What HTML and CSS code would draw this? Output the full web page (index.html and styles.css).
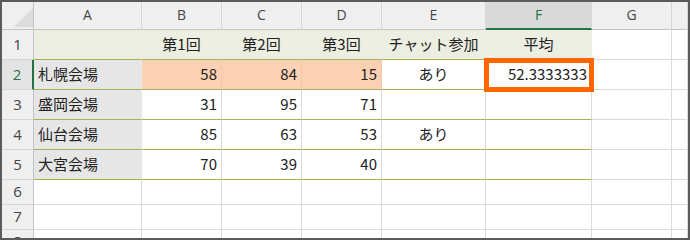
FILE: index.html
```html
<!DOCTYPE html>
<html lang="ja">
<head>
<meta charset="UTF-8" />
<title>会場別集計</title>
<link rel="stylesheet" href="styles.css">
</head>
<body>
  <div class="sheet">
    <!-- 列見出し -->
    <div class="row head">
      <div class="corner">
        <svg width="19" height="19" viewBox="0 0 19 19"><polygon points="19,0 19,19 0,19" fill="#dcdcdc"/></svg>
      </div>
      <div class="hd">A</div>
      <div class="hd">B</div>
      <div class="hd">C</div>
      <div class="hd">D</div>
      <div class="hd">E</div>
      <div class="hd sel">F</div>
      <div class="hd">G</div>
      <div class="hd"></div>
    </div>

    <div class="row r">
      <div class="rh">1</div>
      <div class="c title"></div>
      <div class="c title mid">第1回</div>
      <div class="c title mid">第2回</div>
      <div class="c title mid">第3回</div>
      <div class="c title mid">チャット参加</div>
      <div class="c title mid">平均</div>
      <div class="c"></div>
      <div class="c"></div>
    </div>

    <div class="row r">
      <div class="rh sel">2</div>
      <div class="c name band">札幌会場</div>
      <div class="c hl band num">58</div>
      <div class="c hl band num">84</div>
      <div class="c hl band num">15</div>
      <div class="c band mid">あり</div>
      <div class="c band num active">52.3333333</div>
      <div class="c"></div>
      <div class="c"></div>
    </div>

    <div class="row r">
      <div class="rh">3</div>
      <div class="c name band">盛岡会場</div>
      <div class="c band num">31</div>
      <div class="c band num">95</div>
      <div class="c band num">71</div>
      <div class="c band"></div>
      <div class="c band"></div>
      <div class="c"></div>
      <div class="c"></div>
    </div>

    <div class="row r">
      <div class="rh">4</div>
      <div class="c name band">仙台会場</div>
      <div class="c band num">85</div>
      <div class="c band num">63</div>
      <div class="c band num">53</div>
      <div class="c band mid">あり</div>
      <div class="c band"></div>
      <div class="c"></div>
      <div class="c"></div>
    </div>

    <div class="row r">
      <div class="rh">5</div>
      <div class="c name band">大宮会場</div>
      <div class="c band num">70</div>
      <div class="c band num">39</div>
      <div class="c band num">40</div>
      <div class="c band"></div>
      <div class="c band"></div>
      <div class="c"></div>
      <div class="c"></div>
    </div>

    <div class="row s">
      <div class="rh">6</div>
      <div class="c"></div><div class="c"></div><div class="c"></div><div class="c"></div>
      <div class="c"></div><div class="c"></div><div class="c"></div><div class="c"></div>
    </div>

    <div class="row s">
      <div class="rh">7</div>
      <div class="c"></div><div class="c"></div><div class="c"></div><div class="c"></div>
      <div class="c"></div><div class="c"></div><div class="c"></div><div class="c"></div>
    </div>

    <div class="row s">
      <div class="rh">8</div>
      <div class="c"></div><div class="c"></div><div class="c"></div><div class="c"></div>
      <div class="c"></div><div class="c"></div><div class="c"></div><div class="c"></div>
    </div>
  </div>
</body>
</html>
```

FILE: styles.css
```css
:root {
  --grid: #dadada;
  --hd-bg: #efefef;
  --hd-line: #c4c4c4;
  --band: #a3b15c;
  --title-bg: #ebeee0;
  --name-bg: #e7e6e6;
  --hl-bg: #fcd0b2;
  --sel: #217346;
  --mark: #ff6600;
}
* {
  box-sizing: border-box;
}
body {
  margin: 0;
  font-family: 'Noto Sans CJK JP', 'Noto Sans', sans-serif;
  font-size: 15px;
  color: #222;
  background: #fff;
}
.sheet {
  width: 690px;
  height: 240px;
  border: 2px solid #5b5b5b;
  overflow: hidden;
  background: #fff;
}
.row {
  display: grid;
  grid-template-columns: 32px 108px 80px 80px 80px 104px 106px 80px 1fr;
}
.row.head { height: 28px; }
.row.r { height: 30px; }
.row.s { height: 25px; }

.row > div {
  display: flex;
  align-items: center;
  padding: 0 4px 2px;
  white-space: nowrap;
  overflow: visible;
}

/* 見出し */
.corner {
  background: var(--hd-bg);
  border-right: 1px solid var(--hd-line);
  border-bottom: 1px solid var(--hd-line);
  justify-content: flex-end;
  align-items: flex-end !important;
  padding: 0 0 2px 0 !important;
}
.corner svg {
  display: block;
}
.hd {
  background: var(--hd-bg);
  border-right: 1px solid #d6d6d6;
  border-bottom: 1px solid var(--hd-line);
  justify-content: center;
  color: #444;
  font-family: 'Open Sans', 'Noto Sans', sans-serif;
  font-size: 14px;
}
.hd.sel {
  background: #d9d9d9;
  border-bottom: 2px solid var(--sel);
  color: var(--sel);
}
.rh {
  background: var(--hd-bg);
  border-right: 1px solid var(--hd-line);
  border-bottom: 1px solid #d6d6d6;
  justify-content: center;
  color: #444;
  font-family: 'Open Sans', 'Noto Sans', sans-serif;
  font-size: 15px;
}
.rh.sel {
  background: #e3e3e3;
  border-right: 2px solid var(--sel);
  color: var(--sel);
}

/* セル */
.c {
  border-right: 1px solid var(--grid);
  border-bottom: 1px solid var(--grid);
}
.c.mid { justify-content: center; }
.c.num { justify-content: flex-end; }
.c.band { border-bottom-color: var(--band); }
.c.title {
  background: var(--title-bg);
  border-right-color: var(--title-bg);
  border-bottom-color: var(--band);
}
.c.name {
  background: var(--name-bg);
  border-right-color: var(--name-bg);
}
.c.hl {
  background: var(--hl-bg);
  border-right-color: #f3c6a7;
}

/* 選択中のセル枠 */
.c.active {
  position: relative;
}
.c.active::after {
  content: '';
  position: absolute;
  top: -2px;
  left: -2px;
  right: -3px;
  bottom: -3px;
  border: 5px solid var(--mark);
}
```
